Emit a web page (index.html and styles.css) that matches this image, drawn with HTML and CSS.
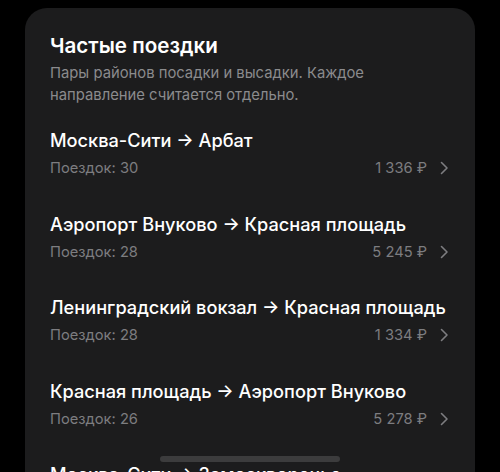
FILE: index.html
```html
<!DOCTYPE html>
<html lang="ru">
<head>
    <meta charset="UTF-8">
    <meta name="viewport" content="width=device-width, initial-scale=1.0">
    <title>Частые поездки</title>
    <link rel="stylesheet" href="styles.css">
</head>
<body>
    <div class="card">
        <h1>Частые поездки</h1>
        <p class="subtitle">Пары районов посадки и высадки. Каждое направление считается отдельно.</p>

        <!-- Trips list -->
        <div class="trip">
            <div class="route">Москва-Сити → Арбат</div>
            <div class="meta">
                <span>Поездок: 30</span>
                <span class="price">1 336 ₽
                    <svg class="chevron" width="9" height="14" viewBox="0 0 9 14"><polyline points="1.5,1.5 7,7 1.5,12.5" fill="none" stroke="currentColor" stroke-width="1.6" stroke-linecap="round" stroke-linejoin="round"/></svg>
                </span>
            </div>
        </div>
        <div class="trip">
            <div class="route">Аэропорт Внуково → Красная площадь</div>
            <div class="meta">
                <span>Поездок: 28</span>
                <span class="price">5 245 ₽
                    <svg class="chevron" width="9" height="14" viewBox="0 0 9 14"><polyline points="1.5,1.5 7,7 1.5,12.5" fill="none" stroke="currentColor" stroke-width="1.6" stroke-linecap="round" stroke-linejoin="round"/></svg>
                </span>
            </div>
        </div>
        <div class="trip">
            <div class="route">Ленинградский вокзал → Красная площадь</div>
            <div class="meta">
                <span>Поездок: 28</span>
                <span class="price">1 334 ₽
                    <svg class="chevron" width="9" height="14" viewBox="0 0 9 14"><polyline points="1.5,1.5 7,7 1.5,12.5" fill="none" stroke="currentColor" stroke-width="1.6" stroke-linecap="round" stroke-linejoin="round"/></svg>
                </span>
            </div>
        </div>
        <div class="trip">
            <div class="route">Красная площадь → Аэропорт Внуково</div>
            <div class="meta">
                <span>Поездок: 26</span>
                <span class="price">5 278 ₽
                    <svg class="chevron" width="9" height="14" viewBox="0 0 9 14"><polyline points="1.5,1.5 7,7 1.5,12.5" fill="none" stroke="currentColor" stroke-width="1.6" stroke-linecap="round" stroke-linejoin="round"/></svg>
                </span>
            </div>
        </div>
        <div class="trip">
            <div class="route">Москва-Сити → Замоскворечье</div>
            <div class="meta">
                <span>Поездок: 24</span>
                <span class="price">1 290 ₽</span>
            </div>
        </div>
    </div>

    <!-- Home indicator -->
    <div class="home-bar"></div>
</body>
</html>
```

FILE: styles.css
```css
body {
    font-family: Inter, "Noto Sans", sans-serif;
    background-color: #000;
    color: #fff;
    margin: 0;
    height: 472px;
    overflow: hidden;
}
.card {
    background-color: #1c1c1d;
    margin: 8px 25px 0;
    padding: 24px 25px 20px;
    border-radius: 22px;
}
h1 {
    font-size: 20.6px;
    font-weight: 600;
    line-height: 28px;
    margin: 0;
}
.subtitle {
    font-size: 14.8px;
    line-height: 22px;
    color: #8b8b8d;
    margin: 2px 0 5px;
}
.trip {
    padding: 17px 0 16.5px;
}
.route {
    font-size: 18.2px;
    font-weight: 500;
    line-height: 24px;
}
.meta {
    display: flex;
    justify-content: space-between;
    align-items: center;
    margin-top: 6px;
    font-size: 14.7px;
    line-height: 20px;
    color: #7d7d80;
}
.price {
    display: flex;
    align-items: center;
    gap: 13px;
}
.chevron {
    color: #7d7d80;
    margin-right: 1px;
}
.home-bar {
    position: fixed;
    left: 160px;
    top: 456px;
    width: 180px;
    height: 6px;
    border-radius: 3px;
    background-color: #3c3c3d;
}
```
